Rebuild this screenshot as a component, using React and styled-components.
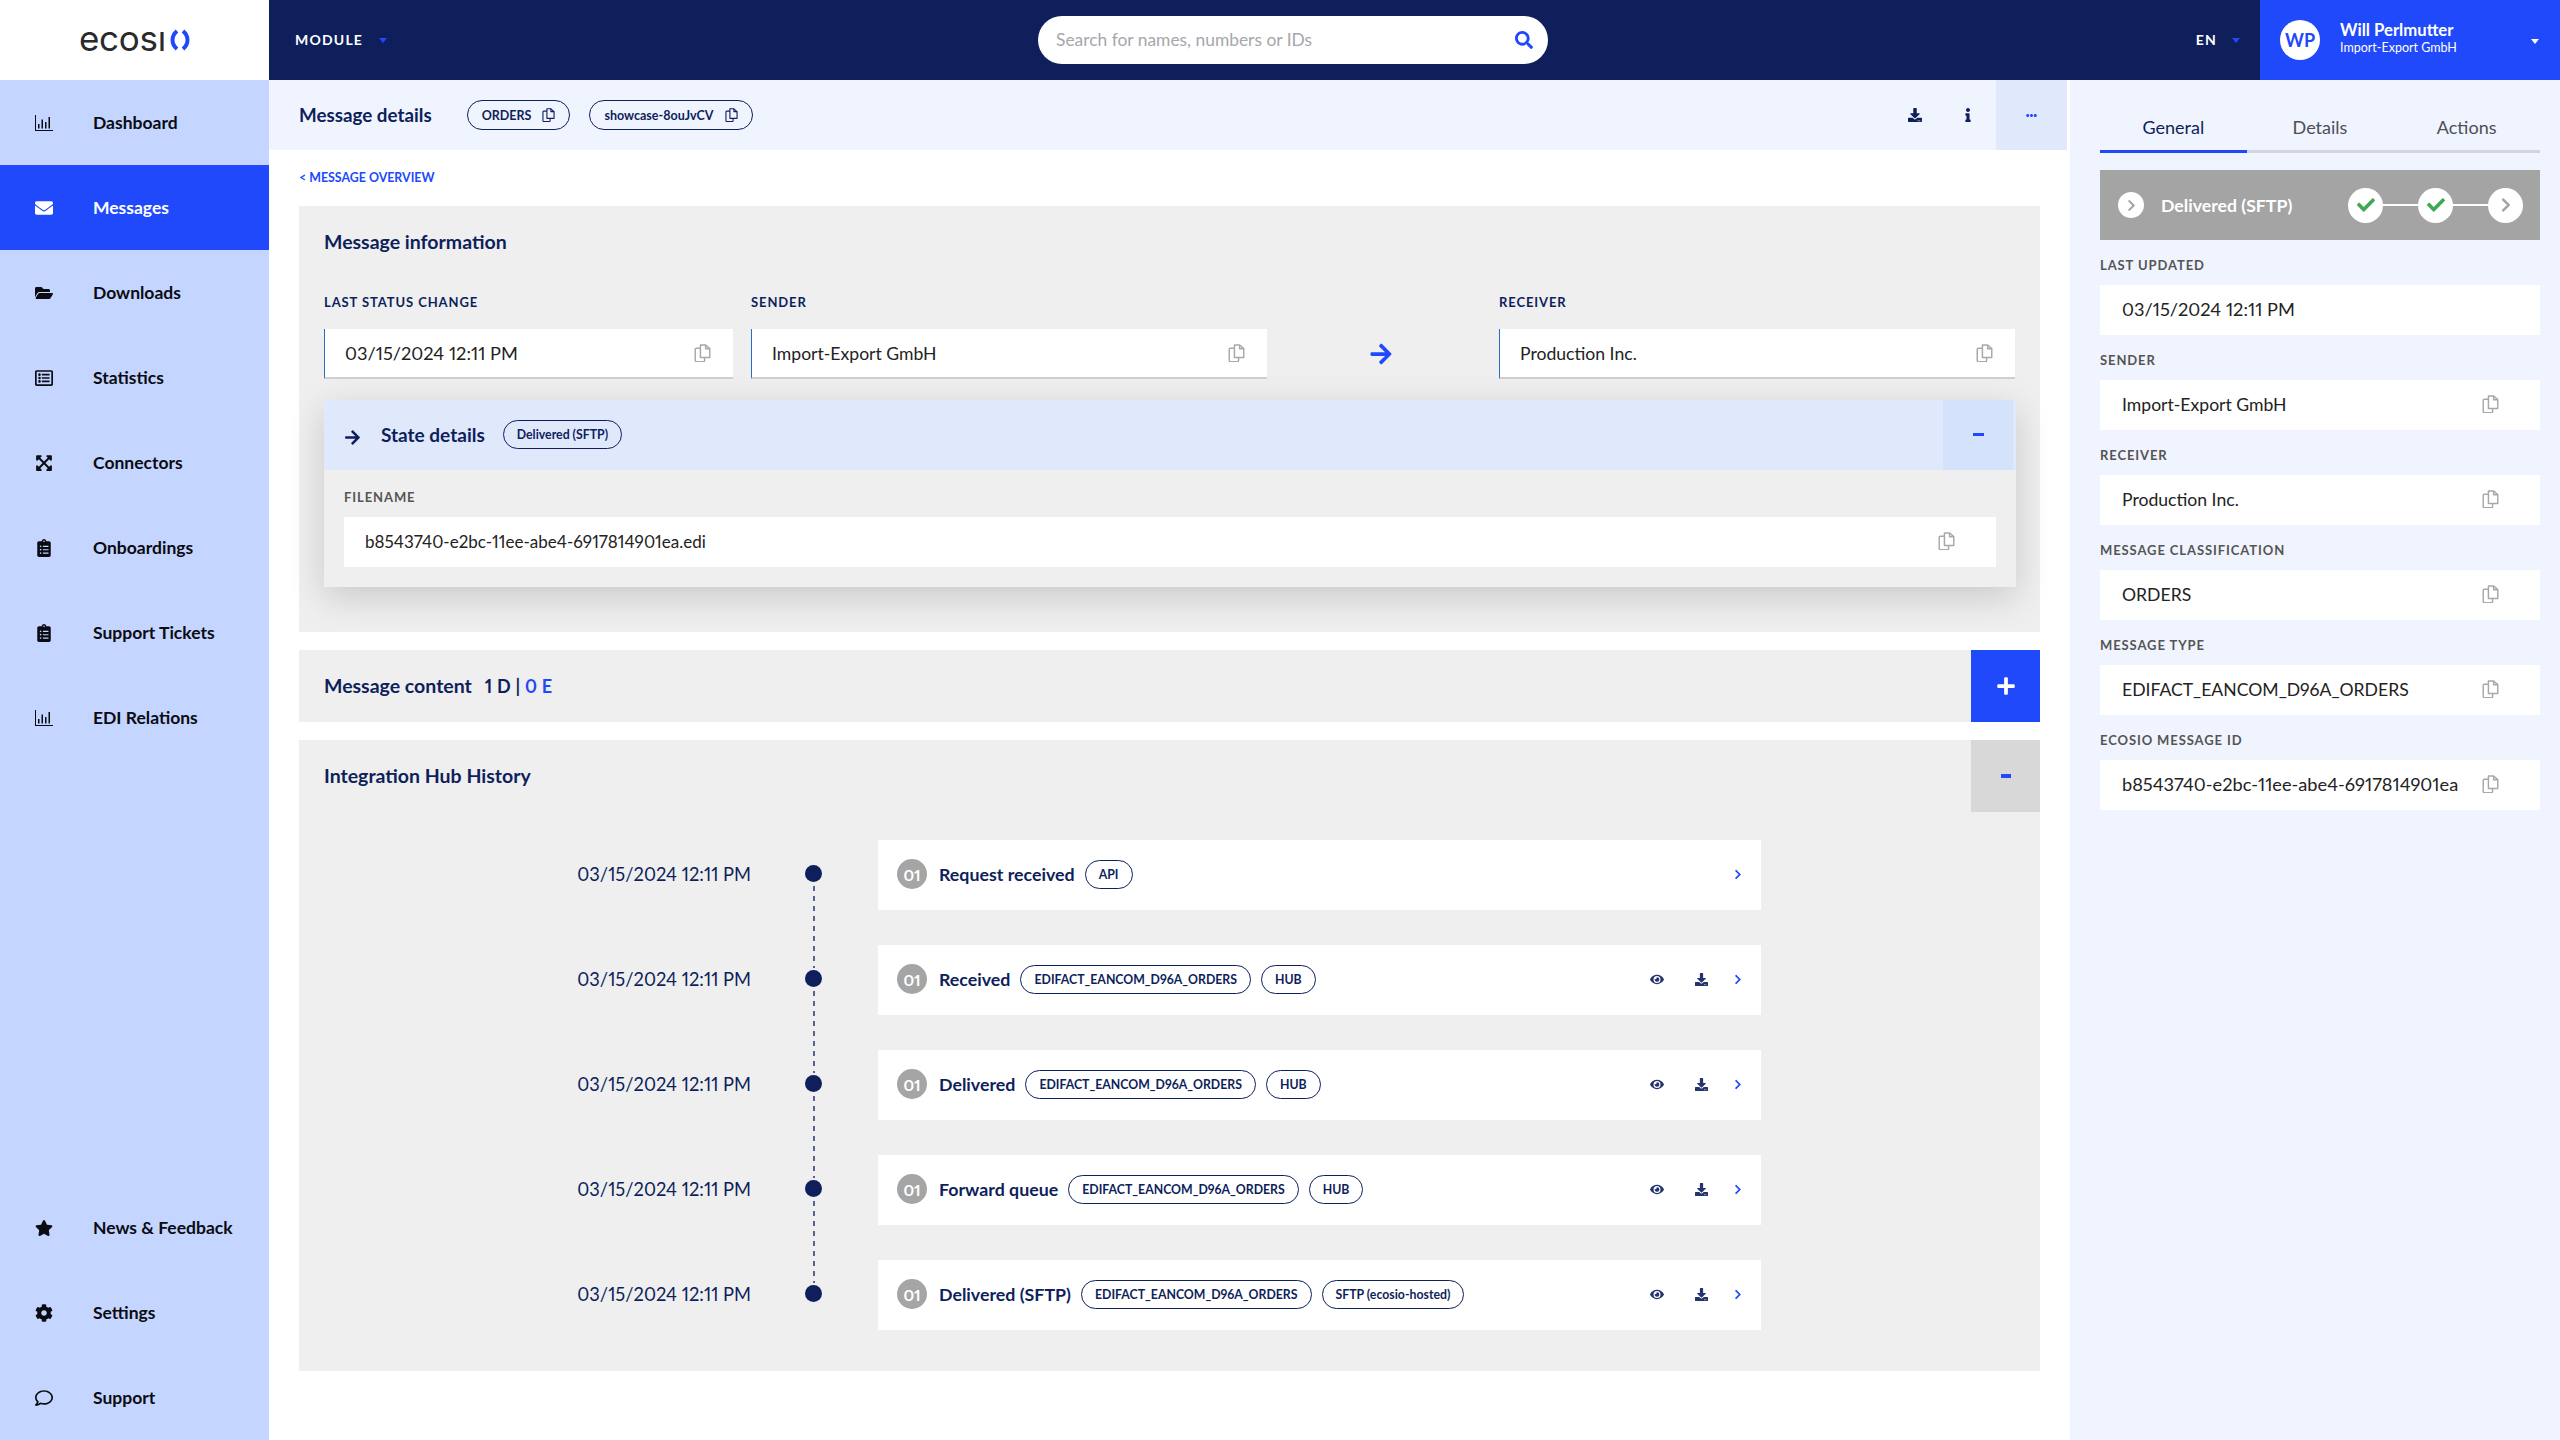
import styled, { createGlobalStyle } from 'styled-components'
import {
  FaEnvelope, FaFolderOpen, FaRegListAlt, FaExpandArrowsAlt, FaClipboardList, FaStar, FaCog,
  FaRegComment, FaDownload, FaInfo, FaEllipsisH, FaEye, FaArrowRight, FaSearch, FaPlus, FaChevronRight, FaCheck,
} from 'react-icons/fa'

const navy = '#0e1f5b'
const blue = '#2049fb'

const GlobalStyle = createGlobalStyle`
  html, body { margin: 0; padding: 0; background: #fff; }
  body { font-family: Lato, "Open Sans", sans-serif; color: #222; font-variant-numeric: proportional-nums; }
  * { box-sizing: border-box; }
`

const Page = styled.div`
  width: 2560px;
  height: 1440px;
  overflow: hidden;
  display: grid;
  grid-template-columns: 269px 1fr;
  grid-template-rows: 80px 1fr;
`

const LogoCell = styled.div`
  background: #fff;
  display: flex;
  align-items: center;
  padding-left: 79px;
`
const LogoText = styled.span`
  font-family: Inter, sans-serif;
  font-size: 35px;
  line-height: 1;
  color: #2a2a2a;
  letter-spacing: -0.3px;
  margin-top: -3px;
`
const TopBar = styled.header`
  background: ${navy};
  display: flex;
  align-items: center;
  color: #fff;
`
const ModuleButton = styled.div`
  display: flex;
  align-items: center;
  gap: 16px;
  margin-left: 26px;
  padding-bottom: 2px;
  font-size: 14px;
  font-weight: 700;
  letter-spacing: 1.2px;
  width: 743px;
`
const Caret = styled.span`
  width: 0;
  height: 0;
  border-left: 4.5px solid transparent;
  border-right: 4.5px solid transparent;
  border-top: 5px solid ${(p) => p.$color || blue};
  margin-top: 2px;
`
const SearchBox = styled.div`
  width: 510px;
  height: 48px;
  border-radius: 24px;
  background: #fff;
  display: flex;
  align-items: center;
  justify-content: space-between;
  padding: 0 15px 1px 18px;
  font-size: 17.400px;
  color: #a5a7ad;
  svg { color: ${blue}; font-size: 18px; }
`
const LangButton = styled.div`
  margin-left: auto;
  display: flex;
  align-items: center;
  gap: 15px;
  margin-right: 20px;
  padding-bottom: 2px;
  font-size: 14px;
  font-weight: 700;
  letter-spacing: 1.2px;
`
const UserBox = styled.div`
  width: 300px;
  height: 80px;
  background: ${blue};
  display: flex;
  align-items: center;
  padding: 0 21px 0 20px;
  ${Caret} { margin-left: auto; }
`
const Avatar = styled.div`
  width: 40px;
  height: 40px;
  border-radius: 50%;
  background: #fff;
  color: ${blue};
  font-size: 18px;
  font-weight: 700;
  display: flex;
  align-items: center;
  justify-content: center;
  margin-right: 20px;
`
const UserText = styled.div`
  margin-bottom: 4px;
`
const UserName = styled.div`
  font-size: 16.700px;
  font-weight: 700;
  line-height: 20px;
`
const UserCompany = styled.div`
  font-size: 12.500px;
  line-height: 16px;
`

const Sidebar = styled.nav`
  background: #c4d6ff;
  display: flex;
  flex-direction: column;
  justify-content: space-between;
`
const NavItem = styled.div`
  height: 85px;
  display: flex;
  align-items: center;
  font-size: 17.500px;
  font-weight: 700;
  color: ${(p) => (p.$active ? '#fff' : '#0b0b12')};
  background: ${(p) => (p.$active ? blue : 'transparent')};
`
const NavIcon = styled.span`
  width: 88px;
  display: flex;
  justify-content: center;
  font-size: 18px;
  margin-right: 5px;
`

const Main = styled.div`
  display: grid;
  grid-template-columns: 1801px 490px;
  min-height: 0;
`
const Content = styled.main`
  display: flex;
  flex-direction: column;
  padding-right: 30px;
  position: relative;
`
const SubHeader = styled.div`
  height: 70px;
  margin-right: -27px;
  background: #f0f4fe;
  display: flex;
  align-items: center;
  padding-left: 30px;
  color: ${navy};
`
const PageTitle = styled.h1`
  margin: 0 35px 1px 0;
  font-size: 18.800px;
  font-weight: 700;
`
const Pill = styled.span`
  display: inline-flex;
  align-items: center;
  height: 29px;
  padding: 0 13px;
  border: 1.5px solid ${navy};
  border-radius: 15px;
  color: ${navy};
  font-size: 12.300px;
  font-weight: 700;
  white-space: nowrap;
  flex: none;
`
const HeadPill = styled(Pill)`
  margin-right: 19px;
  height: 30px;
  gap: 11px;
  padding: 0 14px;
  font-size: 12.500px;
`
const HeadActions = styled.div`
  margin-left: auto;
  display: flex;
  align-items: center;
  height: 100%;
  font-size: 14px;
`
const HeadAction = styled.span`
  width: 53px;
  display: flex;
  justify-content: center;
`
const MoreButton = styled.span`
  width: 71px;
  height: 100%;
  margin-left: 2px;
  background: #e0e9fc;
  color: ${blue};
  font-size: 11px;
  display: flex;
  align-items: center;
  justify-content: center;
`
const BackLink = styled.a`
  display: block;
  margin: 20px 0 0 30px;
  height: 36px;
  line-height: 15px;
  font-size: 12.400px;
  font-weight: 700;
  color: ${blue};
`
const Panel = styled.section`
  margin-left: 30px;
  background: #efefef;
  margin-bottom: 18px;
`
const InfoPanel = styled(Panel)`
  padding: 0 25px;
  height: 426px;
`
const PanelTitle = styled.h2`
  margin: 0;
  font-size: 19.500px;
  font-weight: 700;
  color: ${navy};
  line-height: 24px;
`
const InfoTitle = styled(PanelTitle)`
  padding-top: 24px;
  height: 88px;
`
const FieldsRow = styled.div`
  display: grid;
  grid-template-columns: 409px 534px 232px 516px;
  margin-right: -1px;
`
const SenderColumn = styled.div`
  margin-left: 18px;
`
const ArrowCell = styled.div`
  display: flex;
  align-items: flex-end;
  justify-content: center;
  height: 85px;
  color: ${blue};
  font-size: 24px;
  padding: 0 4px 13px 0;
`
const FieldLabel = styled.div`
  font-size: 13px;
  font-weight: 700;
  letter-spacing: 0.9px;
  color: ${(p) => p.$color || navy};
  line-height: 16px;
`
const TopLabel = styled(FieldLabel)`
  height: 35px;
`
const Field = styled.div`
  height: 50px;
  background: #fff;
  display: flex;
  align-items: center;
  justify-content: space-between;
  font-size: ${(p) => p.$size || 17.600}px;
  color: #222;
  padding: 0 ${(p) => p.$pr || 22}px 2px ${(p) => p.$pl || 20}px;
`
const AccentField = styled(Field)`
  border-left: 1px solid #2a6dc4;
  border-bottom: 2px solid #cfcfcf;
  padding-bottom: 0;
`
const StateCard = styled.div`
  margin-top: 21px;
  margin-right: -1px;
  background: #efefef;
  box-shadow: 0 10px 34px rgba(0, 0, 0, 0.16);
  position: relative;
  z-index: 2;
`
const StateBar = styled.div`
  height: 70px;
  background: #e0e9fc;
  display: flex;
  align-items: center;
  padding: 0 0 1px 20px;
  color: ${navy};
`
const StateArrow = styled.span`
  font-size: 17px;
  display: flex;
  margin: 6px 20px 0 0;
`
const StateTitle = styled.span`
  font-size: 19px;
  font-weight: 700;
  margin-right: 18px;
`
const MinusButton = styled.span`
  width: 70px;
  height: 70px;
  margin-left: auto;
  margin-right: 3px;
  background: #d5e2fb;
  display: flex;
  align-items: center;
  justify-content: center;
  &::before {
    content: '';
    width: 11px;
    height: 3px;
    background: ${blue};
  }
`
const StateBody = styled.div`
  padding: 19px 20px 20px;
`
const FilenameLabel = styled(FieldLabel)`
  height: 28px;
`
const CollapsePanel = styled(Panel)`
  height: 72px;
  display: flex;
  align-items: center;
  padding-left: 25px;
`
const ContentCount = styled.span`
  margin-left: 13px;
  font-size: 18px;
  letter-spacing: 0.2px;
  font-weight: 700;
  color: ${navy};
`
const ErrorCount = styled.span`
  color: ${blue};
`
const BlueButton = styled.span`
  width: 69px;
  height: 72px;
  margin-left: auto;
  background: ${(p) => (p.$grey ? '#d8d8d8' : blue)};
  color: #fff;
  font-size: 20px;
  display: flex;
  align-items: center;
  justify-content: center;
  ${(p) => p.$grey && `
    &::before {
      content: '';
      width: 10px;
      height: 4px;
      background: ${blue};
    }
  `}
`
const HistoryPanel = styled(Panel)`
  height: 631px;
`
const HistoryHead = styled.div`
  height: 72px;
  display: flex;
  align-items: center;
  padding-left: 25px;
`
const Timeline = styled.div`
  margin-top: 28px;
  display: flex;
  flex-direction: column;
  gap: 35px;
`
const TimelineRow = styled.div`
  display: grid;
  grid-template-columns: 452px 127px 883px;
  height: 70px;
  align-items: center;
`
const TimeLabel = styled.div`
  text-align: right;
  font-size: 18.300px;
  color: ${navy};
  margin-top: -3px;
`
const DotCell = styled.div`
  position: relative;
  height: 100%;
`
const Dot = styled.span`
  position: absolute;
  left: 54px;
  top: 25px;
  width: 17px;
  height: 17px;
  border-radius: 50%;
  background: ${navy};
`
const DashLine = styled.span`
  position: absolute;
  left: 62px;
  top: 46px;
  width: 1.500px;
  height: 82px;
  background: repeating-linear-gradient(to bottom, #5a6390 0 5px, transparent 5px 10px);
`
const StepCard = styled.div`
  height: 70px;
  background: #fff;
  display: flex;
  align-items: center;
  padding: 0 19px 2px;
`
const StepNumber = styled.span`
  width: 30px;
  height: 30px;
  border-radius: 50%;
  background: #a5a5a5;
  color: #fff;
  font-size: 16px;
  font-weight: 700;
  display: flex;
  align-items: center;
  justify-content: center;
  margin-right: 12px;
  flex: none;
`
const StepTitle = styled.span`
  font-size: 17.800px;
  font-weight: 700;
  color: ${navy};
  margin-right: 10px;
`
const StepPill = styled(Pill)`
  margin-right: 10px;
`
const StepActions = styled.div`
  margin-left: auto;
  display: flex;
  align-items: center;
`
const StepIcon = styled.span`
  display: flex;
  justify-content: center;
  width: 14px;
  margin-right: 30px;
  font-size: ${(p) => p.$size || 13}px;
  color: #24336c;
`
const StepChevron = styled.span`
  display: flex;
  color: ${blue};
  font-size: 11px;
  margin-left: -4px;
  width: 8px;
`

const RightPanel = styled.aside`
  background: #f0f4fe;
  padding: 0 20px 0 30px;
  position: relative;
`
const Tabs = styled.div`
  display: grid;
  grid-template-columns: repeat(3, 1fr);
  padding-top: 23px;
`
const Tab = styled.div`
  height: 50px;
  display: flex;
  align-items: center;
  justify-content: center;
  font-size: 18px;
  color: ${(p) => (p.$active ? navy : '#4d4f55')};
  border-bottom: 3px solid ${(p) => (p.$active ? blue : '#d0d5e0')};
`
const StatusBar = styled.div`
  margin-top: 17px;
  height: 70px;
  background: #a3a4a3;
  display: flex;
  align-items: center;
  padding: 0 17px 0 18px;
  color: #fff;
`
const StatusName = styled.span`
  font-size: 17.700px;
  font-weight: 700;
  margin-left: 17px;
`
const RoundIcon = styled.span`
  width: ${(p) => p.$size || 35}px;
  height: ${(p) => p.$size || 35}px;
  border-radius: 50%;
  background: #fff;
  color: ${(p) => p.$color || '#a3a4a3'};
  display: flex;
  align-items: center;
  justify-content: center;
  flex: none;
  font-size: ${(p) => p.$icon || 16}px;
`
const Steps = styled.div`
  margin-left: auto;
  display: flex;
  align-items: center;
`
const Connector = styled.span`
  width: 35px;
  height: 2px;
  background: #fff;
`
const SideLabel = styled(FieldLabel)`
  height: 45px;
  padding-top: 17px;
`

const ChartIcon = () => (
  <svg width="18" height="16" viewBox="0 0 18 16" fill="currentColor">
    <path d="M0 0h1v15h17v1H0z" />
    <path d="M3 9h1.500v4.500H3zM6.500 4.500H8v9H6.500zM10 7h1.500v6.500H10zM13.500 2H15v11.500h-1.500z" />
  </svg>
)

const LogoParens = () => (
  <svg width="22" height="22" viewBox="0 0 22 22" fill="none" stroke={blue} strokeWidth="4" style={{ marginLeft: 3 }}>
    <path d="M8 2C2 7 2 15 8 20" />
    <path d="M14 2c6 5 6 13 0 18" />
  </svg>
)

const CopyIcon = ({ color = '#a8a8a8', size = 17 }) => (
  <svg width={size} height={size * 1.1} viewBox="0 0 16 18" fill="none" stroke={color} strokeWidth="1.400" strokeLinejoin="round">
    <path d="M6 1h5l4 3.500V13H6z" />
    <path d="M11 1v3.500h4" />
    <path d="M6 4H2a1 1 0 0 0-1 1v11a1 1 0 0 0 1 1h7a1 1 0 0 0 1-1v-3" />
  </svg>
)

const topItems = [
  { label: 'Dashboard', icon: <ChartIcon /> },
  { label: 'Messages', icon: <FaEnvelope />, active: true },
  { label: 'Downloads', icon: <FaFolderOpen /> },
  { label: 'Statistics', icon: <FaRegListAlt /> },
  { label: 'Connectors', icon: <FaExpandArrowsAlt /> },
  { label: 'Onboardings', icon: <FaClipboardList /> },
  { label: 'Support Tickets', icon: <FaClipboardList /> },
  { label: 'EDI Relations', icon: <ChartIcon /> },
]
const bottomItems = [
  { label: 'News & Feedback', icon: <FaStar /> },
  { label: 'Settings', icon: <FaCog /> },
  { label: 'Support', icon: <FaRegComment /> },
]

const orders = 'EDIFACT_EANCOM_D96A_ORDERS'
const history = [
  { title: 'Request received', pills: ['API'], simple: true },
  { title: 'Received', pills: [orders, 'HUB'] },
  { title: 'Delivered', pills: [orders, 'HUB'] },
  { title: 'Forward queue', pills: [orders, 'HUB'] },
  { title: 'Delivered (SFTP)', pills: [orders, 'SFTP (ecosio-hosted)'] },
]
const sideFields = [
  { label: 'LAST UPDATED', value: '03/15/2024 12:11 PM', noCopy: true, size: 18.2 },
  { label: 'SENDER', value: 'Import-Export GmbH' },
  { label: 'RECEIVER', value: 'Production Inc.' },
  { label: 'MESSAGE CLASSIFICATION', value: 'ORDERS' },
  { label: 'MESSAGE TYPE', value: orders },
  { label: 'ECOSIO MESSAGE ID', value: 'b8543740-e2bc-11ee-abe4-6917814901ea', size: 18.2 },
]

function NavEntry({ item }) {
  return (
    <NavItem $active={item.active}>
      <NavIcon>{item.icon}</NavIcon>
      {item.label}
    </NavItem>
  )
}

export default function App() {
  return (
    <>
      <GlobalStyle />
      <Page>
        <LogoCell>
          <LogoText>ecosı</LogoText>
          <LogoParens />
        </LogoCell>
        <TopBar>
          <ModuleButton>MODULE <Caret /></ModuleButton>
          <SearchBox>
            Search for names, numbers or IDs
            <FaSearch />
          </SearchBox>
          <LangButton>EN <Caret /></LangButton>
          <UserBox>
            <Avatar>WP</Avatar>
            <UserText>
              <UserName>Will Perlmutter</UserName>
              <UserCompany>Import-Export GmbH</UserCompany>
            </UserText>
            <Caret $color="#fff" />
          </UserBox>
        </TopBar>

        <Sidebar>
          <div>{topItems.map((item) => <NavEntry key={item.label} item={item} />)}</div>
          <div>{bottomItems.map((item) => <NavEntry key={item.label} item={item} />)}</div>
        </Sidebar>

        <Main>
          <Content>
            <SubHeader>
              <PageTitle>Message details</PageTitle>
              <HeadPill>ORDERS <CopyIcon color={navy} size={13} /></HeadPill>
              <HeadPill>showcase-8ouJvCV <CopyIcon color={navy} size={13} /></HeadPill>
              <HeadActions>
                <HeadAction><FaDownload /></HeadAction>
                <HeadAction><FaInfo /></HeadAction>
                <MoreButton><FaEllipsisH /></MoreButton>
              </HeadActions>
            </SubHeader>
            <BackLink>&lt; MESSAGE OVERVIEW</BackLink>

            <InfoPanel>
              <InfoTitle>Message information</InfoTitle>
              <FieldsRow>
                <div>
                  <TopLabel>LAST STATUS CHANGE</TopLabel>
                  <AccentField $size={18.2}>03/15/2024 12:11 PM <CopyIcon /></AccentField>
                </div>
                <SenderColumn>
                  <TopLabel>SENDER</TopLabel>
                  <AccentField>Import-Export GmbH <CopyIcon /></AccentField>
                </SenderColumn>
                <ArrowCell><FaArrowRight /></ArrowCell>
                <div>
                  <TopLabel>RECEIVER</TopLabel>
                  <AccentField>Production Inc. <CopyIcon /></AccentField>
                </div>
              </FieldsRow>
              <StateCard>
                <StateBar>
                  <StateArrow><FaArrowRight /></StateArrow>
                  <StateTitle>State details</StateTitle>
                  <Pill>Delivered (SFTP)</Pill>
                  <MinusButton />
                </StateBar>
                <StateBody>
                  <FilenameLabel $color="#555">FILENAME</FilenameLabel>
                  <Field $pr={41} $pl={21} $size={17}>b8543740-e2bc-11ee-abe4-6917814901ea.edi <CopyIcon /></Field>
                </StateBody>
              </StateCard>
            </InfoPanel>

            <CollapsePanel>
              <PanelTitle>Message content</PanelTitle>
              <ContentCount>1 D | <ErrorCount>0 E</ErrorCount></ContentCount>
              <BlueButton><FaPlus /></BlueButton>
            </CollapsePanel>

            <HistoryPanel>
              <HistoryHead>
                <PanelTitle>Integration Hub History</PanelTitle>
                <BlueButton $grey />
              </HistoryHead>
              <Timeline>
                {history.map((step, i) => (
                  <TimelineRow key={step.title}>
                    <TimeLabel>03/15/2024 12:11 PM</TimeLabel>
                    <DotCell>
                      <Dot />
                      {i < history.length - 1 && <DashLine />}
                    </DotCell>
                    <StepCard>
                      <StepNumber>01</StepNumber>
                      <StepTitle>{step.title}</StepTitle>
                      {step.pills.map((p) => <StepPill key={p}>{p}</StepPill>)}
                      <StepActions>
                        {!step.simple && <StepIcon $size={15}><FaEye /></StepIcon>}
                        {!step.simple && <StepIcon><FaDownload /></StepIcon>}
                        <StepChevron><FaChevronRight /></StepChevron>
                      </StepActions>
                    </StepCard>
                  </TimelineRow>
                ))}
              </Timeline>
            </HistoryPanel>
          </Content>

          <RightPanel>
            <Tabs>
              <Tab $active>General</Tab>
              <Tab>Details</Tab>
              <Tab>Actions</Tab>
            </Tabs>
            <StatusBar>
              <RoundIcon $size={26} $icon={13}><FaChevronRight /></RoundIcon>
              <StatusName>Delivered (SFTP)</StatusName>
              <Steps>
                <RoundIcon $color="#3fa854" $icon={18}><FaCheck /></RoundIcon>
                <Connector />
                <RoundIcon $color="#3fa854" $icon={18}><FaCheck /></RoundIcon>
                <Connector />
                <RoundIcon><FaChevronRight /></RoundIcon>
              </Steps>
            </StatusBar>
            {sideFields.map((f) => (
              <div key={f.label}>
                <SideLabel $color="#555">{f.label}</SideLabel>
                <Field $pr={41} $pl={22} $size={f.size}>
                  {f.value}
                  {!f.noCopy && <CopyIcon />}
                </Field>
              </div>
            ))}
          </RightPanel>
        </Main>
      </Page>
    </>
  )
}
